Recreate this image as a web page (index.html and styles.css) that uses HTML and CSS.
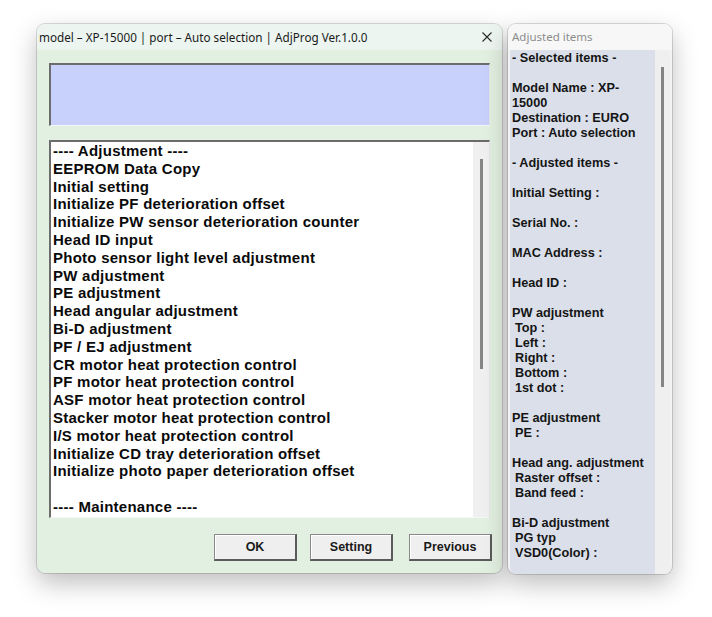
FILE: index.html
```html
<!DOCTYPE html>
<html>
<head>
<meta charset="utf-8">
<link rel="stylesheet" href="styles.css">
</head>
<body>
<div class="desk">
  <div class="win main">
    <div class="titlebar">
      <span class="title">model – XP-15000 | port – Auto selection | AdjProg Ver.1.0.0</span>
      <svg class="close" width="12" height="12" viewBox="0 0 12 12"><path d="M1.5 1.5 L10.5 10.5 M10.5 1.5 L1.5 10.5" stroke="#2a2a2a" stroke-width="1.1" fill="none"/></svg>
    </div>
    <div class="content">
      <div class="bluebox"></div>
      <div class="listbox">
        <div class="items">
          <div>---- Adjustment ----</div>
          <div>EEPROM Data Copy</div>
          <div>Initial setting</div>
          <div>Initialize PF deterioration offset</div>
          <div>Initialize PW sensor deterioration counter</div>
          <div>Head ID input</div>
          <div>Photo sensor light level adjustment</div>
          <div>PW adjustment</div>
          <div>PE adjustment</div>
          <div>Head angular adjustment</div>
          <div>Bi-D adjustment</div>
          <div>PF / EJ adjustment</div>
          <div>CR motor heat protection control</div>
          <div>PF motor heat protection control</div>
          <div>ASF motor heat protection control</div>
          <div>Stacker motor heat protection control</div>
          <div>I/S motor heat protection control</div>
          <div>Initialize CD tray deterioration offset</div>
          <div>Initialize photo paper deterioration offset</div>
          <div>&nbsp;</div>
          <div>---- Maintenance ----</div>
        </div>
        <div class="vscroll"><div class="thumb list-thumb"></div></div>
      </div>
      <div class="buttons">
        <div class="btn">OK</div>
        <div class="btn">Setting</div>
        <div class="btn btn-wide-gap">Previous</div>
      </div>
    </div>
  </div>
  <div class="win side">
    <div class="side-title">Adjusted items</div>
    <div class="side-body">
      <div class="side-text">
        <div>- Selected items -</div>
        <div>&nbsp;</div>
        <div>Model Name : XP-</div>
        <div>15000</div>
        <div>Destination : EURO</div>
        <div>Port : Auto selection</div>
        <div>&nbsp;</div>
        <div>- Adjusted items -</div>
        <div>&nbsp;</div>
        <div>Initial Setting :</div>
        <div>&nbsp;</div>
        <div>Serial No. :</div>
        <div>&nbsp;</div>
        <div>MAC Address :</div>
        <div>&nbsp;</div>
        <div>Head ID :</div>
        <div>&nbsp;</div>
        <div>PW adjustment</div>
        <div class="ind">Top :</div>
        <div class="ind">Left :</div>
        <div class="ind">Right :</div>
        <div class="ind">Bottom :</div>
        <div class="ind">1st dot :</div>
        <div>&nbsp;</div>
        <div>PE adjustment</div>
        <div class="ind">PE :</div>
        <div>&nbsp;</div>
        <div>Head ang. adjustment</div>
        <div class="ind">Raster offset :</div>
        <div class="ind">Band feed :</div>
        <div>&nbsp;</div>
        <div>Bi-D adjustment</div>
        <div class="ind">PG typ</div>
        <div class="ind">VSD0(Color) :</div>
      </div>
      <div class="side-scroll"><div class="thumb side-thumb"></div></div>
    </div>
  </div>
</div>
</body>
</html>
```

FILE: styles.css
```css
* { box-sizing: border-box; }
html, body { margin: 0; padding: 0; background: #ffffff; }
body { width: 712px; height: 617px; overflow: hidden; }

.desk {
  display: flex;
  align-items: flex-start;
  gap: 6px;
  padding: 24px 0 0 37px;
}

.win {
  border-radius: 8px;
  overflow: hidden;
  box-shadow: 0 0 0 1px rgba(0,0,0,0.14), 0 10px 26px rgba(0,0,0,0.26);
}

.main {
  width: 465px;
  height: 549px;
  background: #e2f0e1;
  display: flex;
  flex-direction: column;
}

.titlebar {
  height: 26px;
  background: #ecf5f0;
  display: flex;
  align-items: center;
  justify-content: space-between;
  padding: 0 9px 0 2px;
}
.title {
  font-family: "Noto Sans", "Open Sans", sans-serif;
  font-size: 11.7px;
  color: #1a1a1a;
  white-space: nowrap;
}
.close { display: block; }

.content {
  flex: 1;
  padding: 13px 12px 12px 12px;
  display: flex;
  flex-direction: column;
}

.bluebox {
  height: 63px;
  background: #c7d1fb;
  border-top: 2px solid #6c6c6c;
  border-left: 2px solid #6c6c6c;
  border-right: 1px solid #e4e4e4;
  border-bottom: 1px solid #f6f6f6;
}

.listbox {
  margin-top: 14px;
  height: 378px;
  background: #ffffff;
  border-top: 2px solid #6c6c6c;
  border-left: 2px solid #6c6c6c;
  border-right: 1px solid #e4e4e4;
  border-bottom: 1px solid #f6f6f6;
  display: flex;
  overflow: hidden;
}
.items {
  flex: 1;
  padding-left: 2px;
  font-family: "Liberation Sans", Arial, sans-serif;
  font-weight: 700;
  font-size: 15px;
  letter-spacing: 0.25px;
  line-height: 17.8px;
  color: #0a0a0a;
  white-space: nowrap;
}
.vscroll {
  width: 16px;
  background: #f0f0f0;
  padding-left: 7px;
}
.thumb { width: 3px; background: #858585; }
.list-thumb { margin-top: 17px; height: 210px; }

.buttons {
  margin-top: 16px;
  display: flex;
  justify-content: flex-end;
  gap: 13px;
  margin-right: -2px;
}
.btn {
  width: 83px;
  height: 27px;
  background: #efefef;
  border-top: 1px solid #8a8a8a;
  border-left: 1px solid #8a8a8a;
  border-right: 2px solid #5a5a5a;
  border-bottom: 2px solid #5a5a5a;
  box-shadow: inset 1px 1px 0 #ffffff;
  font-family: "Liberation Sans", Arial, sans-serif;
  font-weight: 700;
  font-size: 12.5px;
  color: #1a1a1a;
  display: flex;
  align-items: center;
  justify-content: center;
}
.btn-wide-gap { margin-left: 3px; }

.side {
  width: 164px;
  height: 550px;
  background: #f3f3f3;
  display: flex;
  flex-direction: column;
}
.side-title {
  height: 26px;
  padding: 5px 0 0 4px;
  font-family: "Noto Sans", "Open Sans", sans-serif;
  font-size: 11.5px;
  color: #8c8c8c;
  background: #f7f7f7;
}
.side-body {
  flex: 1;
  display: flex;
  padding: 0 2px 0 2px;
}
.side-text {
  flex: 1;
  background: #dadfe9;
  padding-left: 2px;
  padding-top: 1px;
  font-family: "Liberation Sans", Arial, sans-serif;
  font-weight: 700;
  font-size: 12.7px;
  line-height: 15px;
  color: #151515;
  white-space: nowrap;
  overflow: hidden;
  border-bottom-left-radius: 6px;
}
.ind { padding-left: 3px; }
.side-scroll {
  width: 15px;
  background: #efefef;
  padding-left: 6px;
}
.side-thumb { margin-top: 17px; height: 320px; }
```
